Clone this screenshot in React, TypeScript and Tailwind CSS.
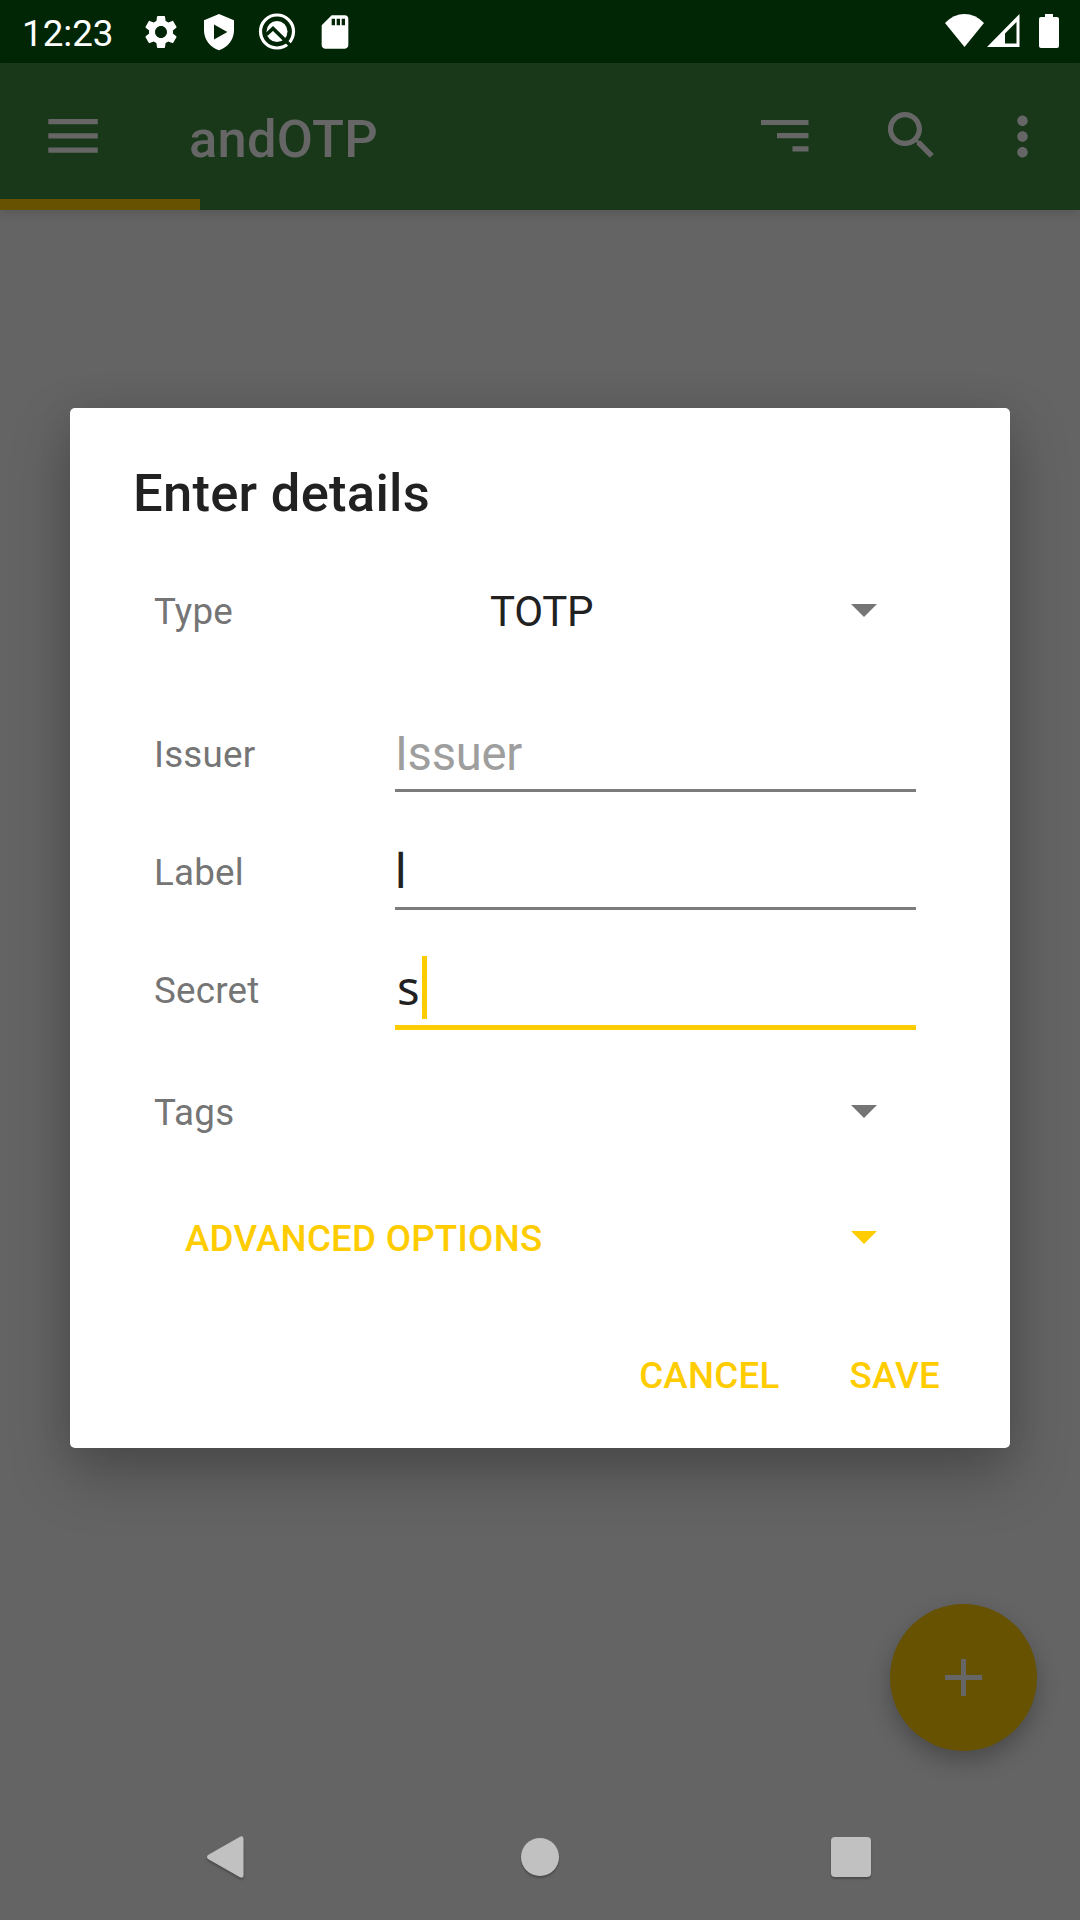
import React from 'react';

const label = 'w-[241px] shrink-0 text-[36.75px] leading-[44px] tracking-[0.2px] text-[#757575]';

function Caret({ className }: { className: string }) {
  return (
    <svg className={className} width="26" height="13" viewBox="0 0 26 13" fill="currentColor">
      <path d="M0 0H26L13 13Z" />
    </svg>
  );
}

function StatusBar() {
  return (
    <div className="flex h-[63px] items-start bg-[#002606] text-white">
      <span className="ml-[22px] mt-[12px] w-[118px] shrink-0 text-[36.75px] leading-[44px]">12:23</span>
      <svg className="mt-[12px] ml-[1px] shrink-0" width="40" height="40" viewBox="0 0 24 24" fill="currentColor">
        <path d="M19.14 12.94c.04-.3.06-.61.06-.94 0-.32-.02-.64-.07-.94l2.03-1.58c.18-.14.23-.41.12-.61l-1.92-3.32c-.12-.22-.37-.29-.59-.22l-2.39.96c-.5-.38-1.03-.7-1.62-.94l-.36-2.54c-.04-.24-.24-.41-.48-.41h-3.84c-.24 0-.43.17-.47.41l-.36 2.54c-.59.24-1.13.57-1.62.94l-2.39-.96c-.22-.08-.47 0-.59.22L2.74 8.87c-.12.21-.08.47.12.61l2.03 1.58c-.05.3-.09.63-.09.94s.02.64.07.94l-2.03 1.58c-.18.14-.23.41-.12.61l1.92 3.32c.12.22.37.29.59.22l2.39-.96c.5.38 1.03.7 1.62.94l.36 2.54c.05.24.24.41.48.41h3.84c.24 0 .44-.17.47-.41l.36-2.54c.59-.24 1.13-.56 1.62-.94l2.39.96c.22.08.47 0 .59-.22l1.92-3.32c.12-.22.07-.47-.12-.61l-2.01-1.58zM12 15.6c-1.98 0-3.6-1.62-3.6-3.6s1.62-3.6 3.6-3.6 3.6 1.62 3.6 3.6-1.62 3.6-3.6 3.6z" />
      </svg>
      <svg className="mt-[12px] ml-[18px] shrink-0" width="40" height="40" viewBox="0 0 24 24" fill="currentColor">
        <path fillRule="evenodd" d="M12 1.2L3 4.9V11c0 5.6 3.8 10.400 9 12 5.200-1.600 9-6.400 9-12V4.900zM9 7.500L17 12 9 16.500z" />
      </svg>
      <svg className="mt-[12px] ml-[18px] shrink-0" width="40" height="40" viewBox="0 0 40 40" fill="none">
        <circle cx="20" cy="19.500" r="16.500" stroke="white" strokeWidth="3.200" />
        <circle cx="20" cy="19.500" r="10.500" fill="white" />
        <path d="M9.500 22.500L16 16.500L36 36" stroke="#002606" strokeWidth="3.600" />
      </svg>
      <svg className="mt-[12px] ml-[18px] shrink-0" width="40" height="40" viewBox="0 0 24 24" fill="currentColor">
        <path d="M18 2h-8L4.020 8 4 20c0 1.100.9 2 2 2h12c1.100 0 2-.9 2-2V4c0-1.100-.9-2-2-2zm-6 6h-2V4h2v4zm3 0h-2V4h2v4zm3 0h-2V4h2v4z" />
      </svg>
      <div className="ml-auto mt-[14px] mr-[21px] flex">
        <svg width="39" height="34" viewBox="0 0 39 34" fill="currentColor">
          <path d="M0 9Q8.500 0 19.500 0T39 9L19.500 33Z" />
        </svg>
        <svg className="ml-[3px]" width="33" height="34" viewBox="0 0 33 34" fill="currentColor">
          <path fillRule="evenodd" d="M0 33L32.500 0V33ZM18 19.500V29.500H29.500V8Z" />
        </svg>
        <svg className="ml-[19px]" width="20" height="34" viewBox="0 0 20 34" fill="currentColor">
          <path d="M6 0H14V3H18Q20 3 20 5V32Q20 34 18 34H2Q0 34 0 32V5Q0 3 2 3H6Z" />
        </svg>
      </div>
    </div>
  );
}

function AppBar() {
  return (
    <div className="relative h-[147px] bg-[#183819] shadow-[0_3px_10px_rgba(0,0,0,0.15)]">
      <div className="flex h-[147px] items-start text-[#666666]">
        <svg className="ml-[48px] mt-[56px] shrink-0" width="50" height="34" viewBox="0 0 50 34" fill="currentColor">
          <path d="M.3 0H49.800V5.200H.3ZM.3 14.200H49.800V19.400H.3ZM.3 28.500H49.800V33.700H.3Z" />
        </svg>
        <h1 className="ml-[91px] mt-[45px] text-[52.5px] font-medium leading-[62px] tracking-[0.25px]">andOTP</h1>
        <svg className="ml-auto mt-[56px]" width="48" height="33" viewBox="0 0 48 33" fill="currentColor">
          <path d="M0 .9H47.500V6.100H0ZM16 14H47.500V19.200H16ZM31.500 27.200H47.500V32.400H31.500Z" />
        </svg>
        <svg className="ml-[71px] mt-[41px]" width="63" height="63" viewBox="0 0 24 24" fill="currentColor">
          <path d="M15.500 14h-.79l-.28-.27C15.410 12.590 16 11.110 16 9.500 16 5.910 13.090 3 9.500 3S3 5.910 3 9.500 5.910 16 9.500 16c1.610 0 3.090-.59 4.230-1.570l.27.28v.79l5 4.990L20.490 19l-4.990-5zm-6 0C7.010 14 5 11.990 5 9.500S7.010 5 9.500 5 14 7.010 14 9.500 11.990 14 9.500 14z" />
        </svg>
        <svg className="ml-[48px] mr-[26px] mt-[42px]" width="63" height="63" viewBox="0 0 24 24" fill="currentColor">
          <path d="M12 8c1.100 0 2-.9 2-2s-.9-2-2-2-2 .9-2 2 .9 2 2 2zm0 2c-1.100 0-2 .9-2 2s.9 2 2 2 2-.9 2-2-.9-2-2-2zm0 6c-1.100 0-2 .9-2 2s.9 2 2 2 2-.9 2-2-.9-2-2-2z" />
        </svg>
      </div>
      <div className="absolute bottom-0 left-0 h-[11px] w-[200px] bg-[#665200]" />
    </div>
  );
}

function Dialog() {
  return (
    <div className="absolute left-[70px] top-[408px] flex h-[1040px] w-[940px] flex-col rounded-[5px] bg-white px-[63px] text-[#212121] shadow-[0_26px_60px_rgba(0,0,0,0.26),0_0_36px_rgba(0,0,0,0.08)]">
      <h2 className="mt-[54px] text-[52.5px] font-medium leading-[62px] tracking-[0.28px]">Enter details</h2>
      <div className="ml-[21px] mt-[54px] flex h-[60px] items-start">
        <span className={label + ' mt-[12px]'}>Type</span>
        <span className="ml-[95px] mt-[9px] text-[42px] leading-[50px] tracking-[-0.3px]">TOTP</span>
        <Caret className="ml-auto mr-[70px] mt-[26px] text-[#757575]" />
      </div>
      <div className="ml-[21px] mt-[78px] flex h-[76px] items-start">
        <span className={label + ' mt-[17px]'}>Issuer</span>
        <div className="h-[76px] w-[521px] border-b-[3px] border-[#7c7c7c] pt-[10px] text-[47.25px] leading-[56px] tracking-[-0.3px] text-[#9e9e9e]">Issuer</div>
      </div>
      <div className="ml-[21px] mt-[42px] flex h-[76px] items-start">
        <span className={label + ' mt-[17px]'}>Label</span>
        <div className="h-[76px] w-[521px] border-b-[3px] border-[#7c7c7c] pt-[10px] text-[47.25px] leading-[56px]">l</div>
      </div>
      <div className="ml-[21px] mt-[42px] flex h-[78px] items-start">
        <span className={label + ' mt-[17px]'}>Secret</span>
        <div className="flex h-[78px] w-[521px] items-start border-b-[5px] border-[#ffcc00]">
          <span className="w-[27px] pl-[2px] pt-[5px] font-['Noto_Sans'] text-[47.25px] leading-[60px]">s</span>
          <span className="mt-[4px] h-[63px] w-[5px] bg-[#ffcc00]" />
        </div>
      </div>
      <div className="ml-[21px] mt-[60px] flex h-[45px] items-start">
        <span className={label + ' mt-[1px]'}>Tags</span>
        <Caret className="ml-auto mr-[70px] mt-[15px] text-[#757575]" />
      </div>
      <div className="ml-[52px] mt-[81px] flex h-[45px] items-start text-[#ffcc00]">
        <span className="mt-[1px] text-[36.75px] font-medium leading-[44px] tracking-[0.22px]">ADVANCED OPTIONS</span>
        <Caret className="ml-auto mr-[70px] mt-[15px]" />
      </div>
      <div className="mt-[93px] flex justify-end gap-[70px] pr-[7px] text-[36.75px] font-medium leading-[44px] tracking-[0.22px] text-[#ffcc00]">
        <span>CANCEL</span>
        <span>SAVE</span>
      </div>
    </div>
  );
}

function NavigationBar() {
  return (
    <div className="mt-auto flex h-[126px] items-start pt-[42px] text-[#c1c1c1]">
      <svg className="ml-[206px] drop-shadow-[0_2px_1px_rgba(0,0,0,0.25)]" width="38" height="42" viewBox="0 0 38 42" fill="currentColor">
        <path d="M2 19L34 .7Q37.500-.8 37.500 3V39Q37.500 42.800 34 41.300L2 23Q0 21 2 19Z" />
      </svg>
      <div className="ml-[277px] mt-[2px] h-[38px] w-[38px] rounded-full bg-[#c1c1c1] shadow-[0_2px_2px_rgba(0,0,0,0.25)]" />
      <div className="ml-[272px] mt-[1px] h-[40px] w-[40px] rounded-[4px] bg-[#c1c1c1] shadow-[0_2px_2px_rgba(0,0,0,0.25)]" />
    </div>
  );
}

export default function App() {
  return (
    <div className="relative flex h-[1920px] w-[1080px] flex-col overflow-hidden bg-[#646464] font-[Roboto,sans-serif]">
      <StatusBar />
      <AppBar />
      <Dialog />
      <div className="absolute left-[890px] top-[1604px] flex h-[147px] w-[147px] items-center justify-center rounded-full bg-[#665200] shadow-[0_10px_22px_rgba(0,0,0,0.26)]">
        <svg width="37" height="37" viewBox="0 0 37 37" fill="#666666">
          <path d="M16 0H21V16H37V21H21V37H16V21H0V16H16Z" />
        </svg>
      </div>
      <NavigationBar />
    </div>
  );
}
